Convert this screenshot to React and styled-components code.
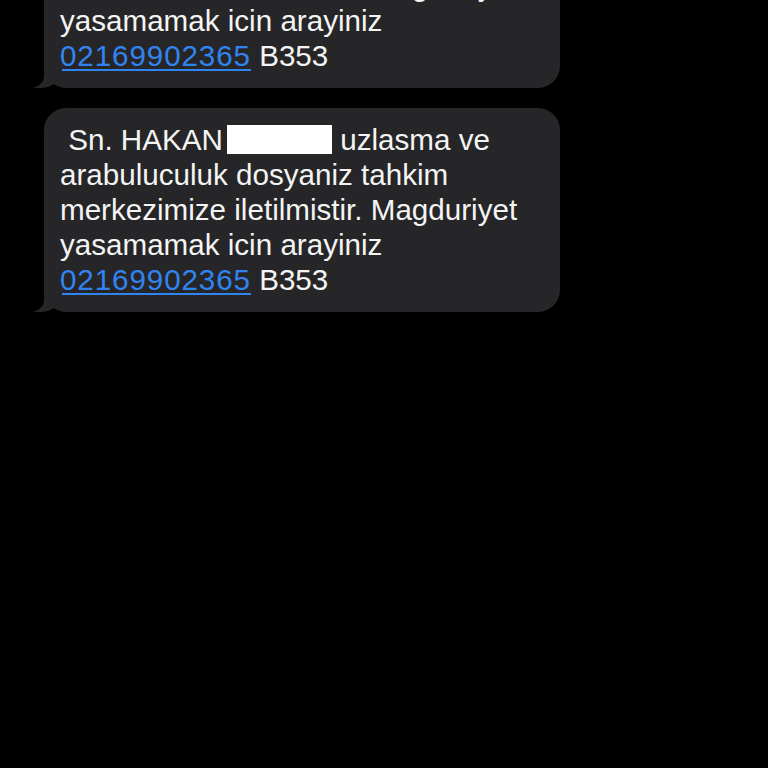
import styled, { createGlobalStyle } from "styled-components"

const Global = createGlobalStyle`
  html, body {
    margin: 0;
    padding: 0;
    background: #000;
  }
  body {
    font-family: "Liberation Sans", Arial, sans-serif;
    -webkit-font-smoothing: antialiased;
  }
`

const Screen = styled.div`
  width: 768px;
  height: 768px;
  overflow: hidden;
  background: #000;
`

const Thread = styled.div`
  display: flex;
  flex-direction: column;
  gap: 20px;
  padding-left: 44px;
  margin-top: -116px;
`

const Bubble = styled.div`
  position: relative;
  box-sizing: border-box;
  width: 516px;
  padding: 14px 16px 15px 16px;
  background: #262628;
  border-radius: 22px;
  color: #f4f4f4;
  font-size: 29.6px;
  line-height: 35px;

  &::before {
    content: "";
    position: absolute;
    left: -16px;
    bottom: 0;
    width: 34px;
    height: 26px;
    background: #262628;
    border-bottom-right-radius: 22px 18px;
  }
  &::after {
    content: "";
    position: absolute;
    left: -30px;
    bottom: 0;
    width: 30px;
    height: 30px;
    background: #000;
    border-bottom-right-radius: 14px 12px;
  }
`

const Phone = styled.span`
  color: #3184f0;
  text-decoration: underline;
  text-decoration-thickness: 2px;
  text-underline-offset: 3px;
  letter-spacing: 0.9px;
`

const Redacted = styled.span`
  display: inline-block;
  width: 105px;
  height: 29px;
  margin-left: -4px;
  background: #fff;
  vertical-align: -4px;
`

const Message = () => (
  <Bubble>
    &nbsp;Sn. HAKAN <Redacted /> uzlasma ve
    <br />
    arabuluculuk dosyaniz tahkim
    <br />
    merkezimize iletilmistir. Magduriyet
    <br />
    yasamamak icin arayiniz
    <br />
    <Phone>02169902365</Phone> B353
  </Bubble>
)

export default function App() {
  return (
    <Screen>
      <Global />
      <Thread>
        <Message />
        <Message />
      </Thread>
    </Screen>
  )
}
